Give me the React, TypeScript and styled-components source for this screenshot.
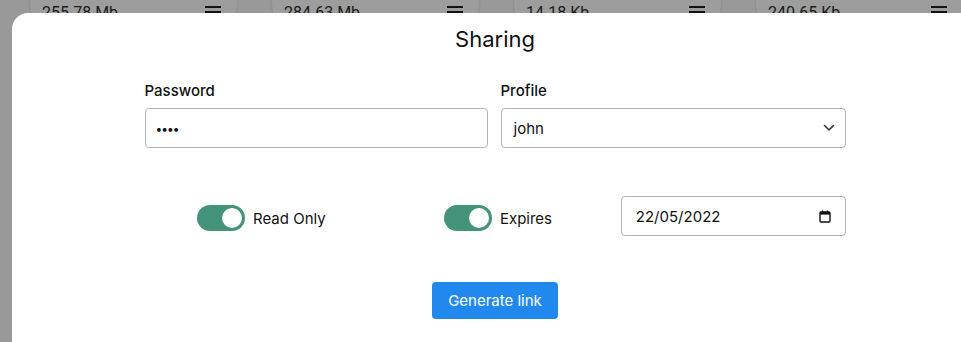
import * as React from "react";
import styled, { createGlobalStyle } from "styled-components";

const GlobalStyle = createGlobalStyle`
  html, body {
    margin: 0;
    padding: 0;
    background: #999999;
    overflow: hidden;
    font-family: Inter, "Liberation Sans", Arial, sans-serif;
  }
`;

const Page = styled.div`
  position: relative;
  width: 961px;
  height: 342px;
  overflow: hidden;
`;

const CardRow = styled.div`
  display: flex;
  gap: 35px;
  padding-left: 30px;
  margin-top: -30px;
`;

const FileCard = styled.div`
  flex: 0 0 207px;
  height: 66px;
  box-sizing: border-box;
  border-radius: 32px;
  background: #9d9d9d;
  box-shadow: 0 0 3px rgba(0, 0, 0, 0.15);
  display: flex;
  align-items: flex-start;
  justify-content: space-between;
  padding: 33px 16px 0 12px;
  font-family: Roboto, "Liberation Sans", sans-serif;
  font-size: 16px;
  line-height: 19px;
  color: #1c1c1c;
`;

const Burger = styled.span`
  display: flex;
  flex-direction: column;
  gap: 3px;
  margin-top: 3px;

  i {
    display: block;
    width: 16px;
    height: 2px;
    background: #111;
  }
`;

const Modal = styled.div`
  position: absolute;
  top: 13px;
  left: 12px;
  width: 966px;
  height: 360px;
  background: #ffffff;
  border-radius: 16px;
  display: flex;
  flex-direction: column;
  align-items: center;
`;

const Title = styled.h2`
  margin: 12px 0 0;
  font-size: 22px;
  font-weight: 400;
  line-height: 28px;
  color: #111;
`;

const Form = styled.div`
  width: 701px;
  margin-top: 29px;
  display: flex;
  flex-direction: column;
`;

const FieldRow = styled.div`
  display: grid;
  grid-template-columns: 343px 345px;
  column-gap: 13px;
`;

const Field = styled.label`
  display: flex;
  flex-direction: column;
  gap: 8px;
`;

const Label = styled.span`
  font-size: 15px;
  font-weight: 500;
  line-height: 18px;
  color: #111;
`;

const controlBase = `
  box-sizing: border-box;
  height: 40px;
  border: 1px solid #b4b4b4;
  border-radius: 4px;
  background: #fff;
  font-family: Inter, "Liberation Sans", Arial, sans-serif;
  font-size: 15px;
  color: #111;
  outline: none;
`;

const TextInput = styled.input`
  ${controlBase}
  padding: 0 10px;
  font-size: 12px;
  letter-spacing: -1px;
`;

const SelectBox = styled.div`
  ${controlBase}
  display: flex;
  align-items: center;
  justify-content: space-between;
  padding: 0 10px 0 12px;
`;

const OptionsRow = styled.div`
  display: grid;
  grid-template-columns: 1fr 1fr 1fr;
  align-items: center;
  margin-top: 48px;
`;

const ToggleGroup = styled.div<{ $shift?: number }>`
  display: flex;
  align-items: center;
  justify-content: center;
  gap: 8px;
  margin: 4px 0 0 ${(p) => p.$shift ?? 0}px;
  font-size: 15px;
  color: #111;
`;

const Switch = styled.span<{ $on: boolean }>`
  position: relative;
  width: 48px;
  height: 26px;
  border-radius: 13px;
  background: ${(p) => (p.$on ? "#43937a" : "#cfcfcf")};

  &::after {
    content: "";
    position: absolute;
    top: 3px;
    left: ${(p) => (p.$on ? "25px" : "3px")};
    width: 20px;
    height: 20px;
    border-radius: 50%;
    background: #fff;
  }
`;

const DateBox = styled(SelectBox)`
  margin-left: 9px;
  padding: 0 14px 0 14px;
`;

const GenerateButton = styled.button`
  margin-top: 46px;
  height: 37px;
  padding: 0 16px;
  border: none;
  border-radius: 4px;
  background: #2189ee;
  color: #fff;
  font-family: Inter, "Liberation Sans", Arial, sans-serif;
  font-size: 15px;
`;

const files = ["255.78 Mb", "284.63 Mb", "14.18 Kb", "240.65 Kb"];

const Chevron = () => (
  <svg width="12" height="8" viewBox="0 0 12 8" fill="none">
    <path d="M1.5 1.5 6 6l4.5-4.5" stroke="#333" strokeWidth="1.6" strokeLinecap="round" strokeLinejoin="round" />
  </svg>
);

const CalendarIcon = () => (
  <svg width="12" height="13" viewBox="0 0 12 13" fill="none">
    <rect x="1" y="2" width="10" height="10" rx="1" stroke="#111" strokeWidth="1.4" />
    <rect x="1" y="2" width="10" height="2.6" fill="#111" />
    <path d="M3.5 0.5v2M8.5 0.5v2" stroke="#111" strokeWidth="1.2" />
  </svg>
);

export default function App() {
  return (
    <Page>
      <GlobalStyle />
      <CardRow>
        {files.map((size) => (
          <FileCard key={size}>
            <span>{size}</span>
            <Burger>
              <i />
              <i />
              <i />
            </Burger>
          </FileCard>
        ))}
      </CardRow>
      <Modal>
        <Title>Sharing</Title>
        <Form>
          <FieldRow>
            <Field>
              <Label>Password</Label>
              <TextInput type="password" defaultValue="john" />
            </Field>
            <Field>
              <Label>Profile</Label>
              <SelectBox>
                <span>john</span>
                <Chevron />
              </SelectBox>
            </Field>
          </FieldRow>
          <OptionsRow>
            <ToggleGroup>
              <Switch $on />
              <span>Read Only</span>
            </ToggleGroup>
            <ToggleGroup $shift={6}>
              <Switch $on />
              <span>Expires</span>
            </ToggleGroup>
            <DateBox>
              <span>22/05/2022</span>
              <CalendarIcon />
            </DateBox>
          </OptionsRow>
        </Form>
        <GenerateButton>Generate link</GenerateButton>
      </Modal>
    </Page>
  );
}
